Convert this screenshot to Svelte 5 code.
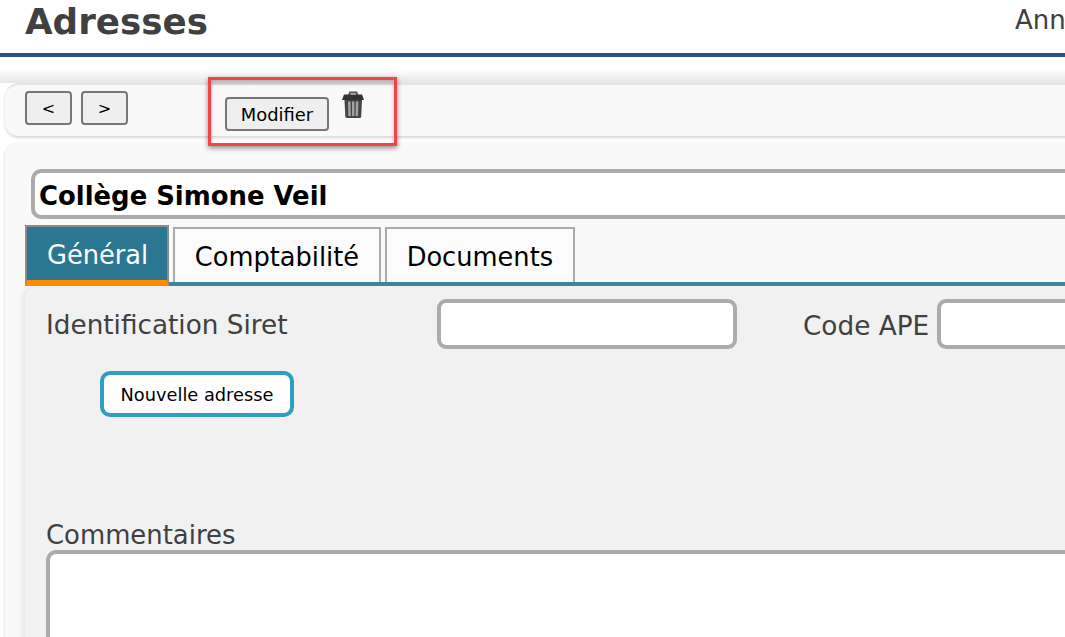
<script>
  const tabs = [
    { label: 'Général', active: true },
    { label: 'Comptabilité', active: false },
    { label: 'Documents', active: false }
  ];
</script>

<div class="page">
  <header class="top">
    <h1>Adresses</h1>
    <span class="year">Ann</span>
  </header>

  <div class="zone">
    <div class="toolbar">
      <div class="nav">
        <button class="btn">&lt;</button>
        <button class="btn">&gt;</button>
      </div>
      <button class="btn modify">Modifier</button>
      <svg class="trash" width="24" height="28" viewBox="0 0 24 28" aria-label="Supprimer">
        <path d="M8 4.500L9 1.500h6.500l1 3" fill="none" stroke="#555" stroke-width="2"/>
        <path d="M3 3.500h18l2 5.500H1z" fill="#333"/>
        <path d="M3.500 9h17.500l-.8 16.500a1.500 1.500 0 0 1-1.500 1.500H5.800a1.500 1.500 0 0 1-1.500-1.500z" fill="#454545"/>
        <path d="M7 10.500h2.600l.2 14.500H7.400zM11 10.500h2.400v14.500H11zM14.800 10.500h2.600l-.4 14.500h-2.400z" fill="#a3a3a3"/>
      </svg>
    </div>

    <section class="card">
      <div class="name">Collège Simone Veil</div>

      <div class="tabs">
        {#each tabs as tab}
          <div class="tab" class:active={tab.active}>{tab.label}</div>
        {/each}
      </div>

      <div class="panel">
        <div class="row">
          <span class="lbl siret">Identification Siret</span>
          <div class="field f-siret"></div>
          <span class="lbl ape">Code APE</span>
          <div class="field f-ape"></div>
        </div>
        <button class="new">Nouvelle adresse</button>
        <div class="lbl comment">Commentaires</div>
        <div class="field area"></div>
      </div>
    </section>
  </div>

  <div class="callout"></div>
</div>

<style>
  :global(html), :global(body) {
    margin: 0;
    height: 637px;
    overflow: hidden;
    background: #fff;
  }
  .page {
    position: relative;
    width: 1065px;
    height: 637px;
    overflow: hidden;
    font-family: "DejaVu Sans", Verdana, sans-serif;
    color: #404040;
  }
  .top {
    height: 53px;
    box-sizing: content-box;
    border-bottom: 4px solid #2f4f87;
    display: flex;
    justify-content: space-between;
    white-space: nowrap;
  }
  h1 {
    margin: 0 0 0 25px;
    font-size: 35.7px;
    line-height: 44px;
    font-weight: 700;
    color: #404040;
  }
  .year {
    font-size: 26px;
    line-height: 40px;
    width: 50px;
    color: #404040;
  }
  .zone {
    height: 580px;
    padding: 26px 0 0 5px;
    box-sizing: border-box;
    background: linear-gradient(#fff, #fff 12px, #e6e6e6 26px, #fff 26px);
    width: 1200px;
  }
  .toolbar {
    height: 53px;
    box-sizing: border-box;
    background: #f9f9f9;
    border-radius: 14px 0 0 14px;
    border-top: 2px solid #e4e4e4;
    box-shadow: 0 2px 3px #d8d8d8;
    display: flex;
    align-items: flex-start;
    padding: 6px 0 0 20px;
  }
  .nav {
    display: flex;
    gap: 9px;
  }
  .btn {
    height: 34px;
    width: 47px;
    padding: 0;
    background: #efefef;
    border: 2px solid #767676;
    border-radius: 4px;
    font: 16px "DejaVu Sans", Verdana, sans-serif;
    color: #000;
  }
  .btn.modify {
    flex: none;
    width: 104px;
    margin: 6px 0 0 97px;
    font-size: 17.900px;
  }
  .trash {
    flex: none;
    margin: 0 0 0 12px;
  }
  .card {
    margin-top: 7px;
    height: 500px;
    background: #f9f9f9;
    border-radius: 14px 0 0 0;
    padding: 26px 0 0 20px;
    box-shadow: -1px 0 2px #e8e8e8;
  }
  .name {
    margin-left: 6px;
    height: 50px;
    box-sizing: border-box;
    background: #fff;
    border: 4px solid #ababab;
    border-radius: 10px;
    padding-left: 4px;
    font-size: 25.900px;
    line-height: 47px;
    font-weight: 700;
    color: #000;
  }
  .tabs {
    position: relative;
    z-index: 1;
    margin-top: 6px;
    height: 61px;
    box-sizing: border-box;
    display: flex;
    align-items: flex-end;
    gap: 4px;
    border-bottom: 4px solid #428497;
  }
  .tab {
    flex: none;
    height: 55px;
    box-sizing: border-box;
    padding: 0 20px 0 19.500px;
    background: #fbfbfb;
    border: 2px solid #ababab;
    border-bottom: 0;
    font-size: 25.700px;
    line-height: 57px;
    color: #000;
  }
  .tab.active {
    height: 61px;
    margin-bottom: -4px;
    padding: 0 19px 0 20px;
    background: #2b7690;
    border: 2px solid #8a8a8a;
    border-bottom: 6px solid #ff8c00;
    line-height: 57px;
    color: #fff;
  }
  .panel {
    position: relative;
    height: 360px;
    background: #f1f1f1;
    border-radius: 14px 0 0 0;
    box-shadow: -3px 0 4px #e6e6e6;
    padding: 13px 0 0 21px;
  }
  .row {
    display: flex;
    align-items: flex-start;
    height: 50px;
    white-space: nowrap;
  }
  .lbl {
    font-size: 25.900px;
    color: #404040;
  }
  .siret {
    flex: none;
    width: 391px;
    font-size: 26.300px;
    line-height: 52px;
  }
  .field {
    box-sizing: border-box;
    background: #fff;
    border: 4px solid #ababab;
    border-radius: 9px;
  }
  .f-siret {
    flex: none;
    width: 300px;
    height: 50px;
  }
  .ape {
    flex: none;
    margin-left: 66px;
    width: 134px;
    font-size: 26.300px;
    line-height: 54px;
  }
  .f-ape {
    flex: none;
    width: 300px;
    height: 50px;
  }
  .new {
    display: block;
    margin: 22px 0 0 54px;
    width: 194px;
    height: 46px;
    padding: 0;
    background: #fff;
    border: 4px solid #2e9fc0;
    border-radius: 10px;
    font: 17.800px "DejaVu Sans", Verdana, sans-serif;
    color: #000;
  }
  .comment {
    margin: 103px 0 0 0;
    line-height: 30px;
  }
  .area {
    margin-top: 0;
    height: 200px;
    width: 1100px;
    border-radius: 10px 0 0 0;
  }
  .callout {
    position: absolute;
    left: 208px;
    top: 77px;
    width: 189px;
    height: 69px;
    box-sizing: border-box;
    border: 3px solid #f5434a;
    box-shadow: 0 2px 5px rgba(0, 0, 0, 0.45), inset 0 3px 4px rgba(0, 0, 0, 0.25);
  }
</style>
